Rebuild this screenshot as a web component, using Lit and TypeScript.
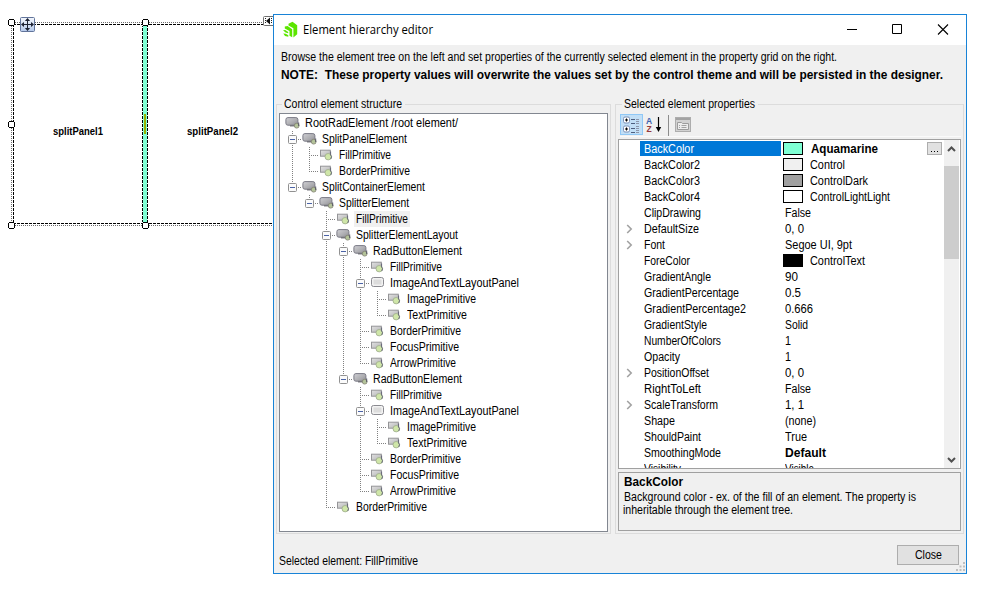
import { LitElement, html, svg, css, nothing } from "lit";
import { customElement, property } from "lit/decorators.js";
import { classMap } from "lit/directives/class-map.js";
import { styleMap } from "lit/directives/style-map.js";

/** A line of text condensed horizontally to a given advance width. */
@customElement("fit-text")
class FitText extends LitElement {
  @property() text = "";
  @property({ type: Number }) w = 0;
  static styles = css`
    :host { display: block; white-space: pre; height: 16px; line-height: 16px; flex: none; }
    span { display: inline-block; transform-origin: 0 50%; }
  `;
  render() {
    return html`<span>${this.text}</span>`;
  }
  updated() {
    const s = this.renderRoot.querySelector("span") as HTMLElement;
    s.style.transform = "none";
    const n = s.getBoundingClientRect().width;
    if (n) s.style.transform = `scaleX(${this.w / n})`;
    this.style.width = this.w + "px";
  }
}

const t = (text: string, w: number, cls = "") => html`<fit-text class=${cls} .text=${text} .w=${w}></fit-text>`;

type Kind = "element" | "primitive" | "layout";
interface Node { level: number; text: string; w: number; kind: Kind; open?: boolean; selected?: boolean }
const n = (level: number, text: string, w: number, kind: Kind, open = false, selected = false): Node =>
  ({ level, text, w, kind, open, selected });
const radButton = (): Node[] => [
  n(4, "RadButtonElement", 89, "element", true),
  n(5, "FillPrimitive", 52, "primitive"),
  n(5, "ImageAndTextLayoutPanel", 129, "layout", true),
  n(6, "ImagePrimitive", 69, "primitive"),
  n(6, "TextPrimitive", 60, "primitive"),
  n(5, "BorderPrimitive", 71, "primitive"),
  n(5, "FocusPrimitive", 69, "primitive"),
  n(5, "ArrowPrimitive", 66, "primitive"),
];
const TREE: Node[] = [
  n(0, "RootRadElement /root element/", 153, "element"),
  n(1, "SplitPanelElement", 85, "element", true),
  n(2, "FillPrimitive", 52, "primitive"),
  n(2, "BorderPrimitive", 71, "primitive"),
  n(1, "SplitContainerElement", 103, "element", true),
  n(2, "SplitterElement", 70, "element", true),
  n(3, "FillPrimitive", 52, "primitive", false, true),
  n(3, "SplitterElementLayout", 102, "element", true),
  ...radButton(),
  ...radButton(),
  n(3, "BorderPrimitive", 71, "primitive"),
];

/** True when another node of the level follows before its parent's branch ends. */
const continues = (row: number, level: number) => {
  for (let i = row + 1; i < TREE.length; i++) {
    if (TREE[i].level < level) return false;
    if (TREE[i].level === level) return true;
  }
  return false;
};

interface Prop { name: string; w: number; value: string; vw: number; color?: string; bold?: boolean; expand?: boolean; selected?: boolean }
const PROPS: Prop[] = [
  { name: "BackColor", w: 50, value: "Aquamarine", vw: 67, color: "#7fffd4", bold: true, selected: true },
  { name: "BackColor2", w: 56, value: "Control", vw: 35, color: "#f0f0f0" },
  { name: "BackColor3", w: 56, value: "ControlDark", vw: 58, color: "#a0a0a0" },
  { name: "BackColor4", w: 56, value: "ControlLightLight", vw: 80, color: "#fff" },
  { name: "ClipDrawing", w: 57, value: "False", vw: 26 },
  { name: "DefaultSize", w: 55, value: "0, 0", vw: 19, expand: true },
  { name: "Font", w: 21, value: "Segoe UI, 9pt", vw: 67, expand: true },
  { name: "ForeColor", w: 46, value: "ControlText", vw: 55, color: "#000" },
  { name: "GradientAngle", w: 67, value: "90", vw: 13 },
  { name: "GradientPercentage", w: 95, value: "0.5", vw: 16 },
  { name: "GradientPercentage2", w: 102, value: "0.666", vw: 28 },
  { name: "GradientStyle", w: 63, value: "Solid", vw: 23 },
  { name: "NumberOfColors", w: 77, value: "1", vw: 6 },
  { name: "Opacity", w: 36, value: "1", vw: 6 },
  { name: "PositionOffset", w: 65, value: "0, 0", vw: 19, expand: true },
  { name: "RightToLeft", w: 57, value: "False", vw: 26 },
  { name: "ScaleTransform", w: 74, value: "1, 1", vw: 19, expand: true },
  { name: "Shape", w: 31, value: "(none)", vw: 31 },
  { name: "ShouldPaint", w: 57, value: "True", vw: 22 },
  { name: "SmoothingMode", w: 77, value: "Default", vw: 41, bold: true },
  { name: "Visibility", w: 37, value: "Visible", vw: 29 },
];

const nodeIcon = (k: Kind) => html`<svg class="ico" width="16" height="16" viewBox="0 0 16 16">
  <defs>
    <linearGradient id="dk" x1="0" y1="0" x2="1" y2="1"><stop offset="0" stop-color="#d0d0d4"/><stop offset=".6" stop-color="#acacb0"/><stop offset="1" stop-color="#8a8a90"/></linearGradient>
    <linearGradient id="lt" x1="0" y1="0" x2="1" y2="1"><stop offset="0" stop-color="#e2e2e2"/><stop offset="1" stop-color="#b4b4b6"/></linearGradient>
  </defs>
  ${k === "element"
    ? svg`<rect x=".9" y="2.600" width="12" height="7.600" rx="2" fill="url(#dk)" stroke="#7a7a86"/>
        <path d="M5 10.900h5" stroke="#5d5d64"/><circle cx="11.700" cy="10.700" r="2.400" fill="#b4c49a" stroke="#80806f" stroke-width=".8"/><path d="M13.700 7.500v3.500" stroke="#4c4c60" stroke-width=".9"/>`
    : k === "primitive"
    ? svg`<rect x="1.500" y="3.200" width="9.800" height="6" fill="url(#lt)" stroke="#959598"/>
        <circle cx="9.200" cy="9.700" r="3.200" fill="#cfe6a8" stroke="#9dab8c" stroke-width=".8"/><path d="M11.600 4.500v3.500l1 1.700-.8 2.300" fill="none" stroke="#5f6172" stroke-width=".9"/>`
    : svg`<rect x="1.500" y="2.500" width="12" height="9" rx="2" fill="#f2f2f2" stroke="#8a8a90"/><rect x="3.500" y="4.500" width="8" height="5" fill="#dcdcdc"/>`}
</svg>`;

@customElement("app-root")
class AppRoot extends LitElement {
  static styles = css`
    :host { display: block; position: relative; width: 989px; height: 589px; overflow: hidden; background: #fff;
      font: 12px/16px "Liberation Sans", Arial, sans-serif; color: #000; }
    * { box-sizing: border-box; }
    svg { display: block; flex: none; }
    .b { font-weight: bold; }

    /* design surface */
    .surface { position: absolute; left: 0; top: 0; width: 273px; height: 240px; overflow: hidden; }
    .caption { position: absolute; top: 123px; font-weight: bold; font-size: 11.5px; }
    .c1 { left: 53px; } .c2 { left: 187px; }
    .art { position: absolute; left: 0; top: 0; }

    /* dialog */
    .dialog { position: absolute; left: 273px; top: 14px; width: 694px; height: 560px; border: 1px solid #1883d7;
      background: #f0f0f0; display: flex; flex-direction: column; }
    .title { height: 30px; background: #fff; display: flex; align-items: center; padding-left: 8px; flex: none; }
    .title fit-text { font-family: "Open Sans", sans-serif; margin-left: 4px; }
    .controls { margin-left: auto; margin-right: 7px; }
    .intro { padding: 4px 0 0 7px; height: 53px; flex: none; }
    .intro fit-text + fit-text { margin-top: 2px; }
    .groups { display: flex; gap: 4px; padding-left: 2px; height: 436px; flex: none; }
    .group { display: flex; flex-direction: column; position: relative; }
    .group::before { content: ""; position: absolute; left: 0; right: 0; top: 6px; bottom: 0; border: 1px solid #dcdcdc; }
    .group > * { position: relative; }
    .left { width: 335px; padding: 0 3px 2px 3px; }
    .right { width: 349px; padding: 0 3px 2px 3px; }
    .legend { display: flex; height: 16px; margin-top: -1px; margin-left: 4px; align-self: flex-start; background: #f0f0f0; padding: 0 3px 0 2px; }
    .left .legend { margin-left: 3px; }
    .legend fit-text { margin-top: -1px; }
    .tree { flex: 1; width: 329px; border: 1px solid #828790; background: #fff; padding: 1px 0 0 5px; }
    .node { display: flex; height: 16px; }
    .cell { width: 17px; height: 16px; display: grid; position: relative; flex: none; }
    .v, .h { grid-area: 1 / 1; margin-left: 7px; }
    .v { width: 1px; background: repeating-linear-gradient(#808080 0 1px, transparent 1px 2px); }
    .v.half { height: 9px; }
    .h { height: 1px; margin-top: 8px; background: repeating-linear-gradient(90deg, #808080 0 1px, transparent 1px 2px); }
    .box { grid-area: 1 / 1; z-index: 1; margin: 4px 0 0 3px; }
    .label { padding: 0 1px 0 2px; margin-left: 2px; height: 16px; }
    .label.sel { background: #f0f0f0; padding-right: 2px; }

    .tools { display: flex; height: 26px; padding: 0 0 0 2px; }
    .grid { width: 343px; height: 330px; border: 1px solid #a0a0a0; background: #fff; display: flex; overflow: hidden; flex: none; }
    .rows { flex: 1; padding-top: 1px; overflow: hidden; }
    .prop { display: flex; height: 16px; }
    .gutter { width: 21px; padding: 3px 0 0 7px; flex: none; }
    .name { width: 141px; height: 15px; padding-left: 4px; flex: none; }
    .name.sel { background: #0078d7; color: #fff; }
    .value { display: flex; flex: 1; padding-left: 4px; }
    .value.swatched { padding-left: 2px; }
    .swatch { width: 20px; height: 13px; border: 1px solid #000; margin: 1px 7px 0 0; flex: none; }
    .swatch + .b { margin-left: 1px; }
    .more { width: 15px; height: 13px; margin: 1px 2px 0 auto; background: #e1e1e1; border: 1px solid #adadad; display: flex;
      justify-content: center; gap: 2px; padding-top: 8px; }
    .more i { width: 1px; height: 1px; background: #000; }
    .scroll { width: 16px; border-right: 1px solid #fff; background: #f0f0f0; display: flex; flex-direction: column; flex: none; }
    .thumb { height: 93px; margin: 9px 0 auto; background: #cdcdcd; }
    .arrow { width: 15px; height: 17px; flex: none; }
    .help { width: 343px; height: 59px; margin-top: 3px; border: 1px solid #a0a0a0; padding: 1px 0 0 5px; }
    .help fit-text + fit-text { margin-top: -1px; }
    .help fit-text + fit-text + fit-text { margin-top: -3px; margin-left: -1px; }
    .footer { display: flex; justify-content: space-between; flex: 1; position: relative; padding: 11px 7px 0 5px; }
    .status { margin-top: 8px; }
    .close { width: 62px; height: 20px; border: 1px solid #adadad; background: #e1e1e1; display: flex; justify-content: center; padding-top: 1px; }
    .grip { position: absolute; right: 1px; bottom: 2px; }
  `;

  private surface() {
    const handles = [[8, 19], [142, 19], [8, 121], [8, 222], [142, 222]];
    return html`<div class="surface">
      <svg class="art" width="273" height="240" shape-rendering="crispEdges">
        <g fill="none" stroke="#6c6c6c" stroke-dasharray="1 1">
          <path d="M11 22.5H273M11 225.5H273M11.5 22V226"/>
        </g>
        <rect x="143" y="25" width="4" height="198" fill="#7fffd4"/>
        <rect x="144" y="114" width="2" height="20" fill="#99b300"/>
        <g fill="none" stroke="#000" stroke-dasharray="3 1">
          <path d="M13 24.5H273M13 223.5H273M13.5 24V224M142.5 24V224M147.5 24V224"/>
        </g>
        ${handles.map(([x, y]) => svg`<rect x=${x} y=${y} width="7" height="7" fill="#fff"/>
          <path d="M${x + 1} ${y + 0.5}h5M${x + 1} ${y + 6.5}h5M${x + 0.5} ${y + 1}v5M${x + 6.5} ${y + 1}v5" stroke="#000"/>`)}
      </svg>
      <svg class="art" width="273" height="240">
        <defs><linearGradient id="mv" x1="0" y1="0" x2="0" y2="1"><stop offset="0" stop-color="#f4f7fc"/><stop offset="1" stop-color="#b4c8ea"/></linearGradient></defs>
        <rect x="20.5" y="17.5" width="14" height="14" rx="1" fill="url(#mv)" stroke="#61749b"/>
        <path d="M27.5 20v9M23 24.5h9" stroke="#1c2233"/>
        <path d="M27.5 18l-2.6 3h5.2zM27.5 31l-2.6-3h5.2zM21 24.5l3-2.6v5.2zM34 24.5l-3-2.6v5.2z" fill="#1c2233"/>
        <rect x="263.5" y="16.5" width="11" height="9" rx="1" fill="#fff" stroke="#707070"/>
        <path d="M265.500 18v6M271.500 18v6" stroke="#222" stroke-dasharray="1 1"/>
        <path d="M266 21l4-3.600v7.200z" fill="#111"/>
      </svg>
      ${t("splitPanel1", 50, "caption c1")}${t("splitPanel2", 51, "caption c2")}
    </div>`;
  }

  private node(nd: Node, row: number) {
    const cells = [];
    for (let l = 1; l <= nd.level; l++) {
      const own = l === nd.level;
      const more = continues(row, l);
      cells.push(html`<span class="cell">
        ${own || more ? html`<i class=${classMap({ v: true, half: !more })}></i>` : nothing}
        ${own ? html`<i class="h"></i>` : nothing}
        ${own && nd.open ? html`<svg class="box" width="9" height="9"><rect x=".5" y=".5" width="8" height="8" rx="1" fill="#fbfbfb" stroke="#919191"/><path d="M2 4.5h5" stroke="#4b63a7"/></svg>` : nothing}
      </span>`);
    }
    return html`<div class="node">${cells}${nodeIcon(nd.kind)}
      <div class=${classMap({ label: true, sel: !!nd.selected })}>${t(nd.text, nd.w)}</div></div>`;
  }

  private prop(p: Prop) {
    return html`<div class="prop">
      <div class="gutter">${p.expand ? html`<svg width="7" height="10"><path d="M1.2 1l4 4-4 4" fill="none" stroke="#a2a2a2" stroke-width="1.6"/></svg>` : nothing}</div>
      <div class=${classMap({ name: true, sel: !!p.selected })}>${t(p.name, p.w)}</div>
      <div class=${classMap({ value: true, swatched: !!p.color })}>
        ${p.color ? html`<div class="swatch" style=${styleMap({ background: p.color })}></div>` : nothing}
        ${t(p.value, p.vw, p.bold ? "b" : "")}
        ${p.selected ? html`<div class="more"><i></i><i></i><i></i></div>` : nothing}
      </div>
    </div>`;
  }

  private tools() {
    return html`<svg width="341" height="25" viewBox="620 114 341 25">
      <path d="M620 137.500h341" stroke="#fafafa"/>
      <rect x="620.5" y="115.5" width="22" height="20" fill="#c2dff6" stroke="#90c8f6"/>
      ${[117.5, 126.5].map((y) => svg`<rect x="623.5" y=${y + 0.5} width="6" height="6" rx="1.500" fill="#fff" stroke="#7d92b8"/>
        <path d="M625 ${y + 3.5}h3M626.5 ${y + 2}v3" stroke="#000"/>`)}
      <path d="M631 120.5h4M631 124.5h4M631 129.5h4M631 133.5h4" stroke="#4d5f7f"/>
      <path d="M636 120.5h3M636 122.5h3M636 124.5h3M636 127.5h3M636 129.5h3M636 131.5h3M636 133.5h3" stroke="#8c96ab"/>
      <text x="646" y="125" font-family="Liberation Sans, sans-serif" font-size="8.500" font-weight="bold" fill="#3d62ad">A</text>
      <text x="646.500" y="133" font-family="Liberation Sans, sans-serif" font-size="8.500" font-weight="bold" fill="#96383c">Z</text>
      <path d="M658.500 118v11" stroke="#000" stroke-width="1.200"/><path d="M655.800 128h5.400l-2.700 5z"/>
      <path d="M668.500 116v21" stroke="#8c8c8c"/>
      <rect x="675.5" y="118.5" width="15" height="14" fill="#d2d2d2" stroke="#adadad"/>
      <path d="M676 120h14" stroke="#a3a3a3" stroke-width="2"/>
      <path d="M677.500 130.500v-7h4l1 1h6v6z" fill="#ededed" stroke="#9c9c9c"/>
      <path d="M679 126.500h1M681.500 126.500h5M679 128.500h1M681.500 128.500h5" stroke="#a3a3a3"/>
    </svg>`;
  }

  private arrow(down: boolean) {
    return html`<svg class="arrow" viewBox="0 0 15 17"><path d=${down ? "M4 7l3.500 3.500L11 7" : "M4 11l3.500-3.500L11 11"} fill="none" stroke="#505050" stroke-width="2"/></svg>`;
  }

  render() {
    return html`${this.surface()}
      <div class="dialog">
        <div class="title">
          <svg width="17" height="18" viewBox="0 0 17 18"><g fill="#5ce500">
            <path d="M6.500 2.800L10.500 .8 15.200 4.200V13.200L11.400 16.600V7.300L6.500 4.500z"/>
            <path d="M2.800 5.600L5.600 4.900 10.200 8.300V16.300L7.500 14.800V10L2.800 7.600z"/>
            <path d="M1 9.300L3.200 9 6.200 11V12.300L3.600 11.500z"/>
            <path d="M1.300 12.500l2.500.3L6.300 14.200v1.600L3 15z"/>
          </g></svg>
          ${t("Element hierarchy editor", 130)}
          <svg class="controls" width="112" height="30" viewBox="0 0 112 30"><path d="M0 14.500h10M45.500 9.500h9v9h-9z" fill="none" stroke="#000"/>
            <path d="M91 9.500l10 10M101 9.500l-10 10" stroke="#000" fill="none" stroke-width="1.100"/></svg>
        </div>
        <div class="intro">
          ${t("Browse the element tree on the left and set properties of the currently selected element in the property grid on the right.", 556)}
          ${t("NOTE:  These property values will overwrite the values set by the control theme and will be persisted in the designer.", 662, "b")}
        </div>
        <div class="groups">
          <div class="group left">
            <div class="legend">${t("Control element structure", 118)}</div>
            <div class="tree">${TREE.map((nd, i) => this.node(nd, i))}</div>
          </div>
          <div class="group right">
            <div class="legend">${t("Selected element properties", 131)}</div>
            <div class="tools">${this.tools()}</div>
            <div class="grid">
              <div class="rows">${PROPS.map((p) => this.prop(p))}</div>
              <div class="scroll">${this.arrow(false)}<div class="thumb"></div>${this.arrow(true)}</div>
            </div>
            <div class="help">
              ${t("BackColor", 59, "b")}
              ${t("Background color - ex. of the fill of an element. The property is", 292)}
              ${t("inheritable through the element tree.", 170)}
            </div>
          </div>
        </div>
        <div class="footer">
          <div class="status">${t("Selected element: FillPrimitive", 139)}</div>
          <div class="close">${t("Close", 27)}</div>
          <svg class="grip" width="9" height="9" fill="#bfbfbf"><path d="M7 0h2v2H7zM3.500 3.500h2v2h-2zM7 3.500h2v2H7zM0 7h2v2H0zM3.500 7h2v2h-2zM7 7h2v2H7z"/></svg>
        </div>
      </div>`;
  }
}
